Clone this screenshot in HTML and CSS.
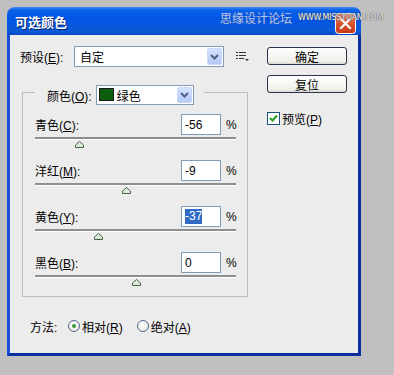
FILE: index.html
```html
<!DOCTYPE html>
<html lang="zh-CN">
<head>
    <meta charset="UTF-8">
    <title>可选颜色</title>
    <link rel="stylesheet" href="styles.css">
</head>
<body>
    <div class="window">
        <div class="titlebar">
            <span class="title">可选颜色</span>
            <span class="close">
                <svg width="21" height="21" viewBox="0 0 21 21">
                    <defs>
                        <linearGradient id="cg" x1="0" y1="0" x2="0" y2="1">
                            <stop offset="0" stop-color="#e9876a"/>
                            <stop offset="0.5" stop-color="#d9532f"/>
                            <stop offset="1" stop-color="#c23a14"/>
                        </linearGradient>
                    </defs>
                    <rect x="0.5" y="0.5" width="20" height="20" rx="3" fill="url(#cg)" stroke="#fff"/>
                    <path d="M6 6 L15 15 M15 6 L6 15" stroke="#fff" stroke-width="2.2" stroke-linecap="square"/>
                </svg>
            </span>
        </div>

        <div class="client">
            <div class="main">
                <div class="preset">
                    <span class="preset-label">预设(<u>E</u>):</span>
                    <div class="combo preset-combo">
                        <span class="combo-text">自定</span>
                        <span class="combo-btn"><svg width="9" height="6" viewBox="0 0 9 6"><path d="M1 1 L4.5 4.5 L8 1" fill="none" stroke="#4d6185" stroke-width="2"/></svg></span>
                    </div>
                    <span class="menu-icon">
                        <svg width="13" height="11" viewBox="0 0 13 11">
                            <rect x="0" y="1" width="2" height="1" fill="#333"/>
                            <rect x="3" y="1" width="7" height="1" fill="#333"/>
                            <rect x="0" y="4" width="2" height="1" fill="#333"/>
                            <rect x="3" y="4" width="7" height="1" fill="#333"/>
                            <rect x="0" y="7" width="2" height="1" fill="#333"/>
                            <rect x="3" y="7" width="5" height="1" fill="#333"/>
                            <path d="M9 8 L13 8 L11 10 Z" fill="#333"/>
                        </svg>
                    </span>
                </div>

                <fieldset class="group">
                    <legend>
                        <span class="legend-inner">
                            <span>颜色(<u>O</u>):</span>
                            <span class="combo color-combo">
                                <span class="swatch"></span>
                                <span class="combo-text">绿色</span>
                                <span class="combo-btn"><svg width="9" height="6" viewBox="0 0 9 6"><path d="M1 1 L4.5 4.5 L8 1" fill="none" stroke="#4d6185" stroke-width="2"/></svg></span>
                            </span>
                        </span>
                    </legend>

                    <div class="slider-row">
                        <div class="row-head">
                            <span class="row-label">青色(<u>C</u>):</span>
                            <span class="num">-56</span>
                            <span class="pct">%</span>
                        </div>
                        <div class="track"><span class="thumb" style="left:22%"></span></div>
                    </div>
                    <div class="slider-row">
                        <div class="row-head">
                            <span class="row-label">洋红(<u>M</u>):</span>
                            <span class="num">-9</span>
                            <span class="pct">%</span>
                        </div>
                        <div class="track"><span class="thumb" style="left:45.5%"></span></div>
                    </div>
                    <div class="slider-row">
                        <div class="row-head">
                            <span class="row-label">黄色(<u>Y</u>):</span>
                            <span class="num"><span class="sel">-37</span></span>
                            <span class="pct">%</span>
                        </div>
                        <div class="track"><span class="thumb" style="left:31.5%"></span></div>
                    </div>
                    <div class="slider-row">
                        <div class="row-head">
                            <span class="row-label">黑色(<u>B</u>):</span>
                            <span class="num">0</span>
                            <span class="pct">%</span>
                        </div>
                        <div class="track"><span class="thumb" style="left:50%"></span></div>
                    </div>
                </fieldset>

                <div class="method">
                    <span class="method-label">方法:</span>
                    <span class="radio on"></span><span class="radio-text">相对(<u>R</u>)</span>
                    <span class="radio second"></span><span class="radio-text">绝对(<u>A</u>)</span>
                </div>
            </div>

            <div class="side">
                <button type="button" class="btn">确定</button>
                <button type="button" class="btn">复位</button>
                <div class="check">
                    <span class="box">
                        <svg width="11" height="11" viewBox="0 0 11 11"><path d="M2 5 L4.5 7.5 L9 2.5" fill="none" stroke="#21a121" stroke-width="2"/></svg>
                    </span>
                    <span>预览(<u>P</u>)</span>
                </div>
            </div>
        </div>
    </div>

    <div class="watermark"><span class="wm-cn">思缘设计论坛</span><span class="wm-en">WWW.MISSYUAN.COM</span></div>
</body>
</html>
```

FILE: styles.css
```css
*{margin:0;padding:0;box-sizing:border-box;}
body{width:394px;height:375px;overflow:hidden;position:relative;background:#c0c0c0;font-family:"Liberation Sans","Noto Sans CJK SC",sans-serif;font-size:12px;color:#000;}
u{text-decoration:underline;}

.window{margin:7px 0 0 7px;width:354px;height:349px;display:flex;flex-direction:column;}
.titlebar{height:28px;border-radius:8px 8px 0 0;background:linear-gradient(#3d8cf8 0,#0a62e8 3px,#0055e5 40%,#0a5ad8 85%,#0648c6 100%);display:flex;align-items:center;justify-content:space-between;padding:0 5px 0 8px;}
.title{color:#fff;font-family:"Noto Sans CJK SC",sans-serif;font-weight:bold;font-size:13px;text-shadow:1px 1px 0 #0a1f6b;}
.close{display:flex;margin-top:4px;}

.client{flex:1;display:flex;background:#ececec;border:3px solid #0b2fa0;border-top:0;border-left-color:#1a4cd6;padding:11px 0 0 10px;}
.main{width:230px;}
.side{margin-left:17px;padding-top:1px;width:80px;display:flex;flex-direction:column;}

.preset{display:flex;align-items:center;height:21px;}
.preset-label{width:54px;}
.combo{display:flex;align-items:stretch;background:#fff;border:1px solid #7f9db9;}
.combo-text{flex:1;padding-left:5px;display:flex;align-items:center;}
.combo-btn{width:15px;margin:1px;border-radius:2px;background:linear-gradient(#d4e1fd,#b5c9f7);border:1px solid #c9d8fb;display:flex;align-items:center;justify-content:center;}
.preset-combo{width:150px;height:21px;}
.menu-icon{margin-left:12px;display:flex;}

.group{margin:12px 0 0 2px;width:226px;border:1px solid #bdbdbd;padding:9px 11px 11px 12px;}
.group legend{padding:6px 10px 0 12px;}
.legend-inner{display:flex;align-items:center;}
.color-combo{width:98px;height:20px;margin-left:4px;}
.color-combo .combo-text{padding-left:3px;}
.swatch{width:15px;height:13px;margin:2px 0 0 2px;background:#0b5e0b;border:1px solid #1a1a1a;}

.slider-row{padding-bottom:8px;}
.slider-row + .slider-row{margin-top:13px;}
.row-head{display:flex;align-items:center;height:21px;}
.row-label{flex:1;}
.num{width:40px;height:21px;background:#fff;border:1px solid #7f9db9;padding-left:3px;display:flex;align-items:center;}
.sel{background:#316ac5;color:#fff;line-height:15px;}
.pct{width:10px;margin-left:5px;}
.track{position:relative;height:2px;margin-top:2px;background:#8e8e8e;box-shadow:0 1px 0 #fff;}
.thumb{position:absolute;top:4px;width:9px;height:7px;margin-left:-4px;background:url("data:image/svg+xml,%3Csvg xmlns='http://www.w3.org/2000/svg' width='9' height='7'%3E%3Cpath d='M4.5 0.5 L8.5 4 L8.5 6.5 L0.5 6.5 L0.5 4 Z' fill='%23dceadb' stroke='%23466346'/%3E%3C/svg%3E") no-repeat;}

.method{display:flex;align-items:center;height:16px;margin-top:21px;padding-left:10px;}
.method-label{width:38px;}
.radio{width:12px;height:12px;border-radius:50%;border:1px solid #506a8c;background:radial-gradient(circle at 40% 40%,#fff,#e0e0dc);display:flex;align-items:center;justify-content:center;}
.radio.on::after{content:"";width:4px;height:4px;border-radius:50%;background:#3a9a3a;}
.radio.second{margin-left:14px;}
.radio-text{margin-left:2px;}

.btn{width:80px;height:18px;font:inherit;border:1px solid #27364a;border-radius:3px;background:linear-gradient(#fefefe,#f0f0ea 85%,#d8d6ce);color:#000;}
.btn + .btn{margin-top:10px;}
.check{display:flex;align-items:center;margin-top:17px;}
.box{width:13px;height:13px;border:1px solid #1c5180;background:#fff;display:flex;align-items:center;justify-content:center;margin-right:2px;}

.watermark{position:absolute;left:220px;top:9px;display:flex;align-items:center;white-space:nowrap;}
.wm-cn{font-family:"Noto Sans CJK SC",sans-serif;font-size:12px;color:#b4c4ee;text-shadow:0 0 1px #4a5fa0;}
.wm-en{margin-left:6px;font-family:"DejaVu Sans",sans-serif;font-size:8px;color:#f2f2f2;text-shadow:0 0 1px #444,0 0 1px #444;letter-spacing:-0.2px;}
```
